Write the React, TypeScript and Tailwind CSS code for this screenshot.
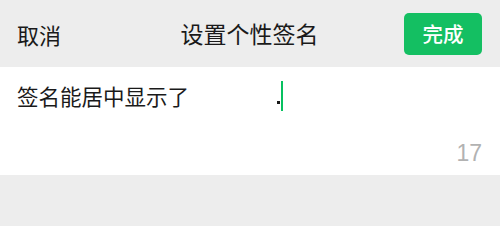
import React from "react";

const font = { fontFamily: '"Noto Sans CJK SC", "Liberation Sans", sans-serif' };

export default function App() {
  return (
    <div className="w-[500px] h-[226px] bg-[#ededed] flex flex-col" style={font}>
      <header className="h-[67px] flex items-center justify-between pl-[17px] pr-[18px]">
        <span className="w-[78px] text-[22px] leading-none text-[#1a1a1a]">取消</span>
        <h1 className="text-[23px] leading-none font-normal text-[#1a1a1a]">设置个性签名</h1>
        <button className="w-[78px] h-[42px] rounded-[5px] bg-[#14bf62] text-white text-[20.5px] leading-none font-medium">
          完成
        </button>
      </header>

      <div className="h-[108px] bg-white flex flex-col px-[17px]">
        <div className="flex items-center pt-[14px] h-[44px]">
          <span className="text-[21.5px] leading-none text-[#1a1a1a]">签名能居中显示了</span>
          <span className="ml-[88px] w-[3px] h-[3px] bg-[#1a1a1a] mt-[12px]"></span>
          <span className="ml-[1px] w-[2px] h-[30px] bg-[#07c160]"></span>
        </div>
        <div className="flex justify-end pt-[31px] pr-[1px]">
          <span className="text-[23px] leading-none text-[#b2b2b2]" style={{ fontFamily: '"Liberation Sans", sans-serif' }}>17</span>
        </div>
      </div>
    </div>
  );
}
